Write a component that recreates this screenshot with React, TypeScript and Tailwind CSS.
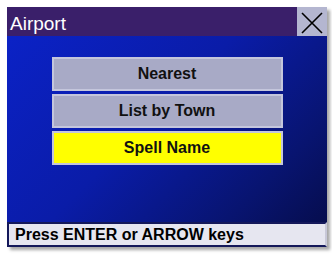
import React from 'react';

const options = ['Nearest', 'List by Town', 'Spell Name'];

export default function App() {
  return (
    <div className="w-[332px] h-[254px] bg-white pt-[7px] pl-[7px]" style={{ fontFamily: '"Liberation Sans", Arial, sans-serif' }}>
      <div className="w-[320px] h-[240px] flex flex-col shadow-[3px_3px_3px_rgba(0,0,0,0.35)]">
        <div className="h-[29px] flex bg-[#3a1f6a]">
          <div className="flex-1 flex items-center pl-[3px] pt-[3px] text-white text-[19px] leading-none">Airport</div>
          <div className="w-[30px] h-[31px] bg-[#b4b6d0] flex items-center justify-center">
            <svg width="24" height="24" viewBox="0 0 24 24" fill="none" stroke="#000" strokeWidth="1.6">
              <path d="M2 2 L22 22 M22 2 L2 22" />
            </svg>
          </div>
        </div>
        <div className="flex-1 flex flex-col items-center pt-[21px] gap-[3px] bg-[linear-gradient(135deg,#0b22c6_0%,#0a1ca8_45%,#081470_80%,#060d4e_100%)]">
          {options.map((o, i) => (
            <div
              key={o}
              className={`w-[231px] h-[34px] flex items-center justify-center border-2 border-[#c4c6dc] text-[16px] font-bold text-[#111] ${
                i === 2 ? 'bg-[#ffff00] border-[#a8a8b8]' : 'bg-[#a8aac6]'
              }`}
            >
              {o}
            </div>
          ))}
        </div>
        <div className="h-[25px] bg-[#e6e6f0] border-2 border-[#14185a] border-r-[#c8c8d8] flex items-center pl-[6px] pt-[1px] text-[16px] font-bold text-black leading-none">
          Press ENTER or ARROW keys
        </div>
      </div>
    </div>
  );
}
